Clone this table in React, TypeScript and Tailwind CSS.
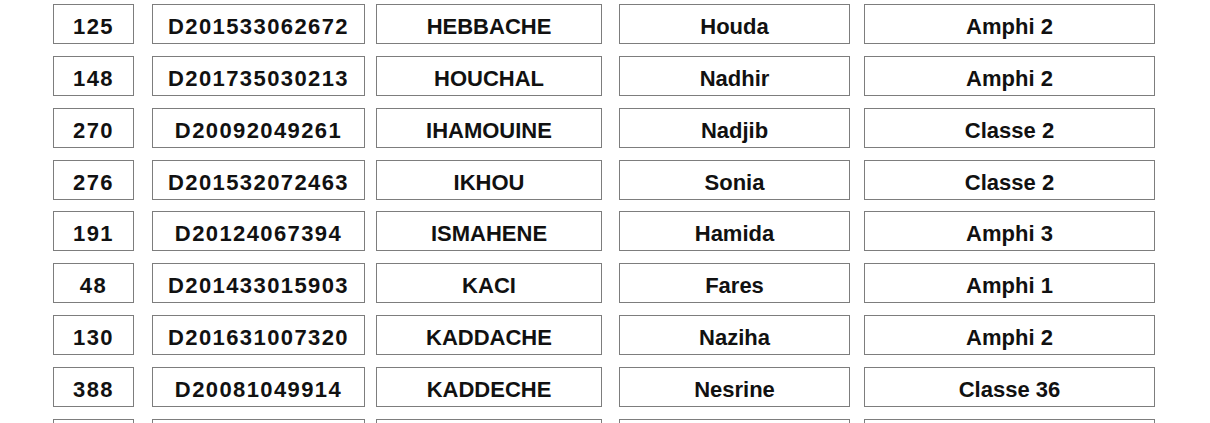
import React from "react";

const rows = [
  ["125", "D201533062672", "HEBBACHE", "Houda", "Amphi 2"],
  ["148", "D201735030213", "HOUCHAL", "Nadhir", "Amphi 2"],
  ["270", "D20092049261", "IHAMOUINE", "Nadjib", "Classe 2"],
  ["276", "D201532072463", "IKHOU", "Sonia", "Classe 2"],
  ["191", "D20124067394", "ISMAHENE", "Hamida", "Amphi 3"],
  ["48", "D201433015903", "KACI", "Fares", "Amphi 1"],
  ["130", "D201631007320", "KADDACHE", "Naziha", "Amphi 2"],
  ["388", "D20081049914", "KADDECHE", "Nesrine", "Classe 36"],
  ["", "", "", "", ""],
];

const cell =
  "h-[40px] shrink-0 border border-[#7d7d7d] bg-white flex items-center justify-center pt-[5px] text-[22px] leading-[33px] font-bold text-[#111]";

export default function App() {
  return (
    <div
      className="w-[1210px] h-[423px] overflow-hidden bg-white pt-[4px] flex flex-col gap-[11.85px]"
      style={{ fontFamily: '"Liberation Sans", Arial, sans-serif' }}
    >
      {rows.map((r, i) => (
        <div key={i} className="flex pl-[53px]">
          <div className={`${cell} w-[81px] tracking-[1.4px]`}>{r[0]}</div>
          <div className={`${cell} w-[213px] ml-[18px] tracking-[1.4px]`}>{r[1]}</div>
          <div className={`${cell} w-[226px] ml-[11px]`}>{r[2]}</div>
          <div className={`${cell} w-[231px] ml-[17px]`}>{r[3]}</div>
          <div className={`${cell} w-[291px] ml-[14px]`}>{r[4]}</div>
        </div>
      ))}
    </div>
  );
}
